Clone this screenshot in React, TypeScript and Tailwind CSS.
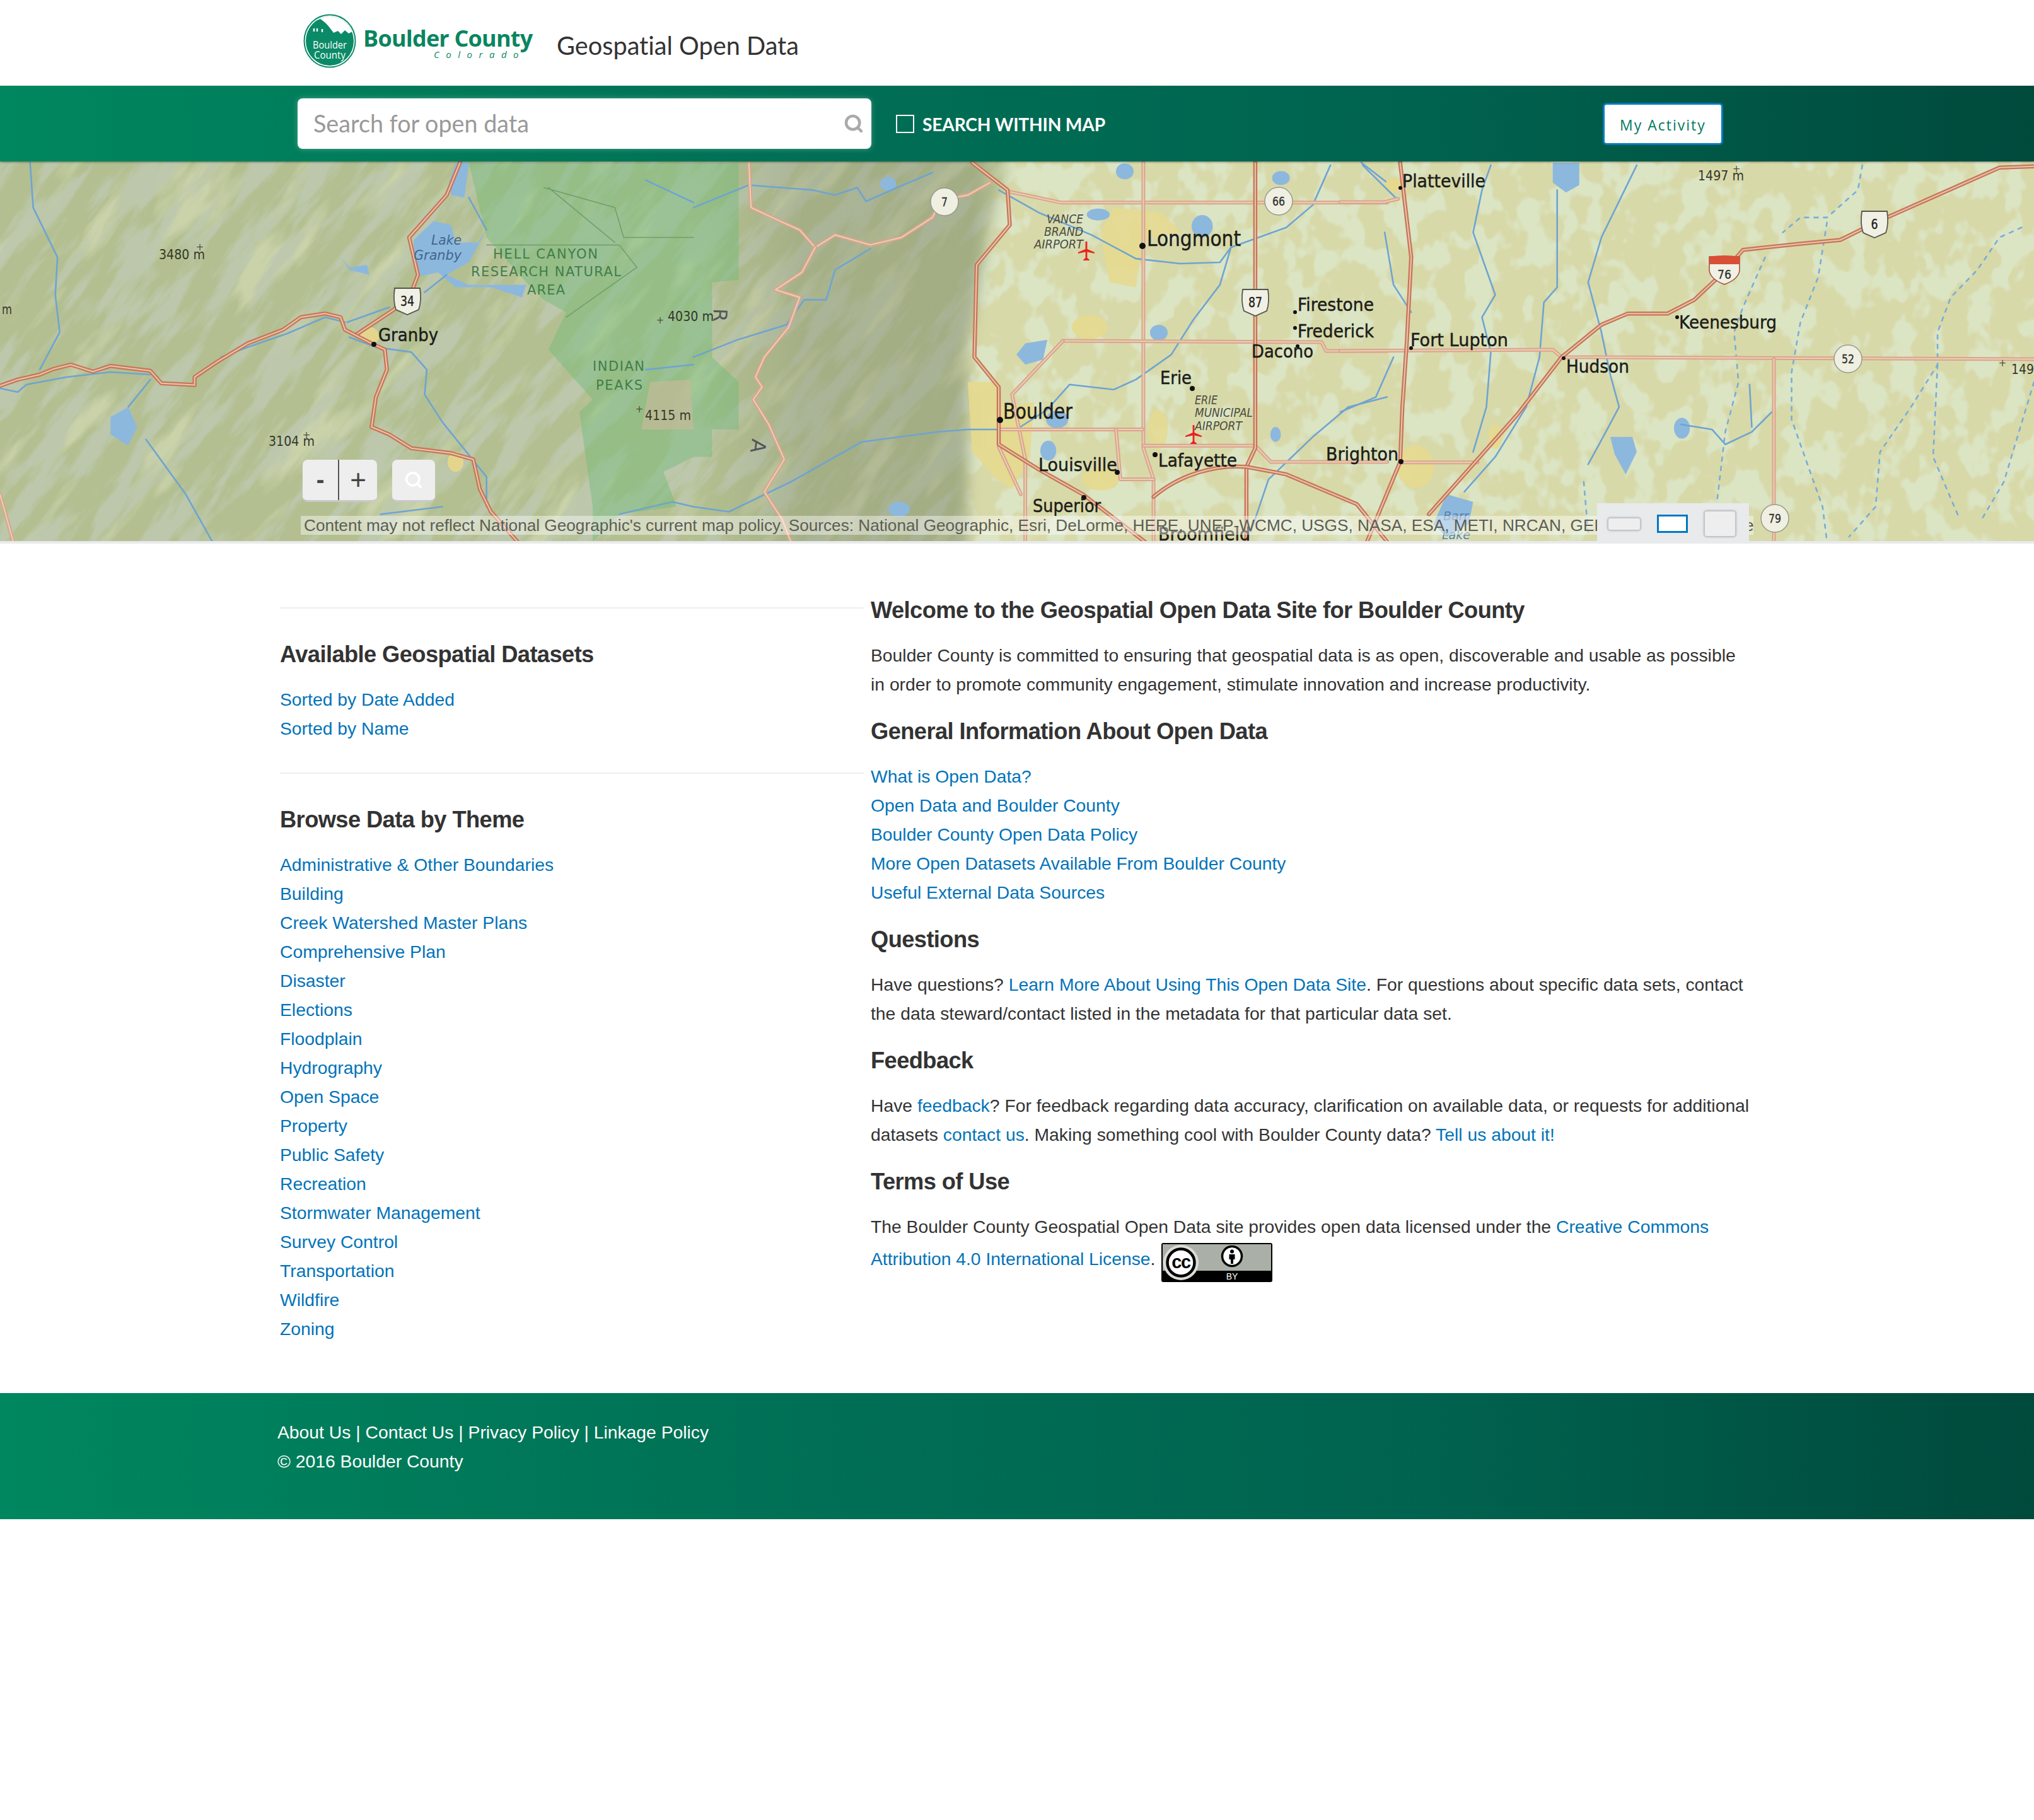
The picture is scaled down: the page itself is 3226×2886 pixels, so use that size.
import React from "react";
import { Search } from "lucide-react";

const P = ({ d, c, w, dash, fill }: { d: string; c: string; w: number; dash?: string; fill?: string }) => (
  <path d={d} fill={fill ?? "none"} stroke={c} strokeWidth={w} strokeDasharray={dash} strokeLinejoin="round" strokeLinecap="round" vectorEffect="non-scaling-stroke" />
);
const Road = ({ d, major }: { d: string; major?: boolean }) => (
  <g>
    <P d={d} c={major ? "#c9745c" : "#dda290"} w={major ? 6.5 : 6} />
    <P d={d} c={major ? "#e6c9a6" : "#e6d4ae"} w={2} />
  </g>
);
const Z = ({ dx, children }: { dx: number; children: React.ReactNode }) => (
  <g transform={`translate(${dx},-7) scale(0.7015,0.3954)`}>{children}</g>
);

const z6Rivers = [
  "M68,20 L75,200 130,400 125,550 135,700 90,850",
  "M0,925 L40,940 60,910 150,880 250,860 340,870",
  "M340,890 L290,1000",
  "M330,1130 L420,1350 480,1540",
  "M500,800 L560,760 650,705 735,640 780,660",
  "M785,660 L880,600",
  "M790,720 L850,760 930,780 965,850 960,950 1000,1060 1050,1170 1100,1280 1100,1400",
  "M1010,470 L960,540",
  "M1060,160 L1100,290",
  "M860,1430 L1000,1400",
  "M1400,1430 L1520,1380 1568,1400",
  "M1460,90 L1568,180",
  "M1460,850 L1568,830",
];
const z7Rivers = [
  "M0,200 L125,110 270,130 320,150 370,120 390,175 460,120 540,60",
  "M690,130 L780,220 900,310 1000,405 1100,425 1190,420 1215,360 1340,280 1400,190 1440,30",
  "M1215,360 L1190,510 1130,650 1080,790 1000,890 950,930 850,910 800,1010 730,1090 620,1090 550,1100 380,1140 220,1300 80,1420 0,1400",
  "M400,365 L320,450 300,570 250,570 210,670 100,730 0,800",
  "M1568,960 L1480,1000 1400,1120 1300,1290 1260,1500",
  "M1510,20 L1568,100",
];
const z8Rivers = [
  "M50,30 L130,170",
  "M340,30 L320,130 300,300 350,550 320,640 340,780 330,1000 300,1180",
  "M100,300 L120,510 160,620",
  "M490,130 L490,520 460,580 450,800 420,1000 350,1200 280,1340",
  "M670,30 L590,320 560,500 590,700 610,870 630,1000 600,1100 560,1230",
  "M770,1070 L840,1090 870,1150 930,1100 975,1020",
  "M925,910 L930,1080",
  "M0,1020 L80,960 120,800",
];
const z8Dashed = [
  "M1180,30 L1170,130 1100,240 1040,240 1000,300",
  "M1100,260 L1080,480 1040,660 1020,860 1020,1050 1090,1400 1100,1540",
  "M960,400 L910,600 890,700 900,900 870,1100 850,1400",
  "M1540,280 L1490,320 1440,450 1380,560 1350,700 1350,830 1290,1000 1220,1180 1210,1400 1150,1520",
  "M1350,830 L1340,1200 1400,1450",
  "M1568,900 L1500,1300 1450,1450",
  "M550,1300 L560,1500",
];

type L = [string, number, number, number, number?, string?];
const bold: L[] = [
  ["Granby", 600, 284, 29, 95],
  ["Longmont", 1819, 133, 34, 149],
  ["Firestone", 2058, 236, 28, 121],
  ["Frederick", 2058, 278, 28, 121],
  ["Dacono", 1985, 310, 28, 98],
  ["Erie", 1840, 352, 28, 50],
  ["Boulder", 1591, 407, 34, 110],
  ["Louisville", 1647, 490, 28, 125],
  ["Lafayette", 1837, 483, 28, 125],
  ["Brighton", 2103, 473, 28, 115],
  ["Superior", 1638, 555, 28, 108],
  ["Broomfield", 1837, 600, 28, 146],
  ["Platteville", 2224, 40, 28, 132],
  ["Fort Lupton", 2237, 292, 28, 155],
  ["Keenesburg", 2663, 264, 28, 155],
  ["Hudson", 2484, 334, 28, 100],
];
const elev: L[] = [
  ["3480 m", 252, 154, 21, 73],
  ["m", 3, 241, 21, 16],
  ["3104 m", 426, 450, 21, 73],
  ["4115 m", 1023, 409, 21, 73],
  ["4030 m", 1059, 252, 21, 73],
  ["1497 m", 2693, 29, 21, 73],
  ["149", 3190, 336, 21, 36],
];
const green: L[] = [
  ["HELL CANYON", 782, 153, 21, 166],
  ["RESEARCH NATURAL", 747, 181, 21, 238],
  ["AREA", 836, 210, 21, 60],
  ["INDIAN", 940, 331, 21, 82],
  ["PEAKS", 945, 361, 21, 74],
];
const italic: L[] = [
  ["VANCE", 1660, 97, 19, 58],
  ["BRAND", 1656, 117, 19, 62],
  ["AIRPORT", 1640, 137, 19, 78],
  ["ERIE", 1895, 384, 19, 36],
  ["MUNICIPAL", 1895, 404, 19, 92],
  ["AIRPORT", 1895, 425, 19, 75],
];
const dots: [number, number, number][] = [
  [593, 289, 4], [1812, 133, 5], [2054, 238, 3], [2054, 263, 3], [2058, 292, 3], [1891, 359, 4],
  [1586, 409, 5], [1772, 492, 4], [1832, 464, 4], [2222, 475, 4], [1719, 532, 4], [2221, 41, 3],
  [2238, 295, 3], [2660, 246, 3], [2480, 311, 3],
];
const pluses: [number, number][] = [[317, 135], [1047, 251], [1014, 392], [2754, 11], [3176, 319], [486, 433]];

const Plane = ({ x, y }: { x: number; y: number }) => (
  <g transform={`translate(${x},${y})`} fill="#e8241f">
    <path d="M-1.4,-15 H1.4 V-3 L13,2 V4 L1.4,1.5 V11 L5,14 V15 H-5 V14 L-1.4,11 V1.5 L-13,4 V2 L-1.4,-3 Z" />
  </g>
);
const Round = ({ x, y, t }: { x: number; y: number; t: string }) => (
  <g>
    <circle cx={x} cy={y} r="22" fill="#efefe2" stroke="#9a9a8e" strokeWidth="1.5" />
    <text x={x} y={y + 7} textAnchor="middle" fontFamily="'DejaVu Sans', sans-serif" fontSize="20" fill="#333" stroke="#333" strokeWidth="0.4" textLength={t.length * 10} lengthAdjust="spacingAndGlyphs">{t}</text>
  </g>
);
const UsShield = ({ x, y, t, w = 40 }: { x: number; y: number; t: string; w?: number }) => (
  <g>
    <path d={`M${x - w / 2},${y - 20} H${x + w / 2} Q${x + w / 2 + 3},${y} ${x + w / 2 - 2},${y + 14} L${x},${y + 22} L${x - w / 2 + 2},${y + 14} Q${x - w / 2 - 3},${y} ${x - w / 2},${y - 20} Z`} fill="#f1f0e4" stroke="#55554e" strokeWidth="1.8" />
    <text x={x} y={y + 8} textAnchor="middle" fontFamily="'DejaVu Sans', sans-serif" fontSize="21" fill="#222" stroke="#222" strokeWidth="0.4" textLength={t.length * 11} lengthAdjust="spacingAndGlyphs">{t}</text>
  </g>
);

function MapArt() {
  const f = "'DejaVu Sans', sans-serif";
  return (
    <svg viewBox="0 -1 3226 602" width="3226" height="602" className="block">
      <defs>
        <filter id="blobs" x="0" y="0" width="100%" height="100%">
          <feTurbulence type="fractalNoise" baseFrequency="0.024 0.018" numOctaves="3" seed="8" />
          <feColorMatrix type="matrix" values="0 0 0 0 0.71  0 0 0 0 0.78  0 0 0 0 0.55  10 0 0 0 -4.9" />
        </filter>
        <filter id="hill" x="0" y="0" width="100%" height="100%">
          <feTurbulence type="fractalNoise" baseFrequency="0.0065 0.03" numOctaves="5" seed="11" />
          <feColorMatrix type="matrix" values="0 0 0 0 0.51  0 0 0 0 0.58  0 0 0 0 0.42  6 0 0 0 -2.75" />
        </filter>
        <filter id="lite" x="0" y="0" width="100%" height="100%">
          <feTurbulence type="fractalNoise" baseFrequency="0.005 0.02" numOctaves="4" seed="21" />
          <feColorMatrix type="matrix" values="0 0 0 0 0.79  0 0 0 0 0.82  0 0 0 0 0.60  5 0 0 0 -2.7" />
        </filter>
        <filter id="soft" x="-5%" y="-5%" width="110%" height="110%">
          <feGaussianBlur stdDeviation="10" />
        </filter>
        <linearGradient id="dark" x1="0" x2="1" y1="0" y2="0">
          <stop offset="0" stopColor="#8d9775" stopOpacity="0" />
          <stop offset="0.7" stopColor="#8d9775" stopOpacity="0" />
          <stop offset="0.8" stopColor="#8a9272" stopOpacity="0.35" />
          <stop offset="0.97" stopColor="#8a9272" stopOpacity="0.4" />
          <stop offset="1" stopColor="#8a9272" stopOpacity="0" />
        </linearGradient>
        <mask id="mt" maskUnits="userSpaceOnUse" x="0" y="-1" width="3226" height="602">
          <path d="M-40,-40 H1610 L1570,110 1535,300 1535,640 H-40 Z" fill="#fff" filter="url(#soft)" />
        </mask>
      </defs>

      <rect y="-1" width="3226" height="602" fill="#d8d9a9" />
      <rect x="1400" y="-1" width="1826" height="602" filter="url(#blobs)" />

      <g mask="url(#mt)">
        <rect y="-1" width="1640" height="602" fill="#b3bf90" />
        <g transform="rotate(-52 800 300)">
          <rect x="-300" y="-900" width="2300" height="2400" filter="url(#lite)" opacity="0.45" />
          <rect x="-300" y="-900" width="2300" height="2400" filter="url(#hill)" opacity="0.95" />
        </g>
        <rect y="-1" width="1590" height="602" fill="url(#dark)" />
      </g>

      <Z dx={0}>
        <path d="M1060,20 L1670,20 L1670,490 L1610,500 L1610,800 L1670,900 L1670,1090 L1610,1090 L1610,1200 L1568,1200 1500,1260 1530,1400 1400,1430 1340,1540 L1340,1400 1310,1020 1340,970 1240,770 1280,620 1230,570 1190,500 1100,320 Z" fill="#6cba78" opacity="0.42" />
        <path d="M1470,900 L1560,890 1568,1090 1450,1090 Z" fill="#c3bb98" opacity="0.75" />
        <P d="M1230,120 L1390,200 1410,320 1568,320 M1100,350 L1400,350 1440,440 1280,640 M1240,120 L1390,340" c="#6d9e6a" w={1.5} />
        <path d="M1030,20 L1060,20 1050,160 1020,150 1015,100 Z" fill="#8db8dd" />
        <path d="M935,330 L980,255 1020,270 1030,340 1080,340 1100,290 1060,420 1010,470 1060,510 1190,510 1180,560 1110,520 1030,520 990,460 940,480 Z" fill="#8db8dd" />
        <path d="M770,400 L790,440 830,430 835,470 790,450 Z" fill="#8db8dd" />
        <path d="M290,1000 L310,1080 290,1155 250,1110 250,1040 Z" fill="#8db8dd" />
        <ellipse cx="1030" cy="1220" rx="18" ry="40" fill="#e3d68c" />
        <ellipse cx="835" cy="715" rx="22" ry="35" fill="#e3d68c" />
        {z6Rivers.map((d, i) => <P key={i} d={d} c="#6ea4d2" w={2.6} />)}
        <Road d="M0,1350 L30,1540" />
        <Road major d="M805,710 L890,610 930,540 945,470 925,320 970,230 1010,150 1040,20" />
        <Road major d="M0,915 L40,890 90,870 120,848 160,830 210,858 250,835 340,855 365,905 440,912 440,880 490,820 560,745 640,690 680,640 735,625 770,640 780,690 840,745 870,770 875,850 850,960 840,1080 880,1110 930,1165 1020,1185 1070,1210 1085,1330 1110,1420 1170,1540" />
      </Z>

      <Z dx={1100}>
        <path d="M950,200 L1060,220 1100,300 1010,330 1010,410 1000,520 940,500 920,300 Z" fill="#e6d98e" opacity="0.85" />
        <ellipse cx="895" cy="680" rx="40" ry="48" fill="#e6d98e" opacity="0.9" />
        <path d="M620,900 L690,900 700,1000 770,980 760,1200 720,1330 680,1280 630,1180 Z" fill="#e6d98e" opacity="0.9" />
        <ellipse cx="920" cy="1290" rx="42" ry="45" fill="#e6d98e" opacity="0.9" />
        <ellipse cx="1050" cy="1090" rx="22" ry="80" fill="#e6d98e" opacity="0.8" />
        <ellipse cx="915" cy="228" rx="26" ry="24" fill="#8db8dd" />
        <ellipse cx="1150" cy="275" rx="24" ry="45" fill="#8db8dd" />
        <path d="M800,730 L790,810 750,830 730,790 750,745 Z" fill="#8db8dd" />
        <ellipse cx="1052" cy="702" rx="20" ry="32" fill="#8db8dd" />
        <ellipse cx="822" cy="1050" rx="25" ry="35" fill="#8db8dd" />
        <ellipse cx="802" cy="1175" rx="18" ry="40" fill="#8db8dd" />
        <ellipse cx="975" cy="55" rx="20" ry="32" fill="#8db8dd" />
        <ellipse cx="1328" cy="82" rx="20" ry="28" fill="#8db8dd" />
        <ellipse cx="1316" cy="1110" rx="12" ry="30" fill="#8db8dd" />
        <ellipse cx="465" cy="1410" rx="24" ry="30" fill="#8db8dd" />
        <ellipse cx="440" cy="105" rx="18" ry="28" fill="#8db8dd" />
        {z7Rivers.map((d, i) => <P key={i} d={d} c="#6ea4d2" w={2.6} />)}
        <Road d="M125,20 L130,200 190,250 240,290 275,360 320,310 400,350 470,320 540,240 560,170 620,150 670,100" />
        <Road d="M275,360 L245,460 185,530 240,560 215,680 160,800 140,880 155,920 135,970 170,1070 205,1210 160,1340 200,1450 220,1540" />
        <Road d="M710,135 L830,180 L1568,180" />
        <Road d="M1017,20 L1017,1165 L1040,1290 1040,1540" />
        <Road d="M835,735 L1420,740 1430,775 1568,775" />
        <Road d="M835,735 L720,950 750,1210 750,1540" />
        <Road d="M690,1090 L1015,1090" />
        <Road d="M955,1090 L965,1290 1040,1290" />
        <Road d="M1017,1155 L1270,1155 1305,1220 1568,1220" />
        <Road d="M690,1160 L740,1350" />
        <Road major d="M1270,20 L1270,1165 L1250,1240 1250,1540" />
        <Road major d="M630,20 L710,130 715,270 640,430 635,800 690,920 690,1150 780,1250 880,1350 1020,1540" />
        <Road major d="M1040,1360 C1100,1270 1180,1230 1250,1240 L1340,1270 1500,1390 1568,1540" />
      </Z>

      <Z dx={2126}>
        <ellipse cx="120" cy="110" rx="18" ry="30" fill="#e6d98e" />
        <ellipse cx="170" cy="1240" rx="42" ry="85" fill="#e6d98e" opacity="0.9" />
        <ellipse cx="350" cy="1120" rx="16" ry="50" fill="#e6d98e" opacity="0.9" />
        <path d="M480,20 L540,20 540,110 510,140 480,100 Z" fill="#8db8dd" />
        <path d="M610,1120 L660,1120 670,1180 645,1270 620,1190 Z" fill="#8db8dd" />
        <ellipse cx="772" cy="1085" rx="18" ry="42" fill="#8db8dd" />
        <path d="M240,1350 L300,1380 290,1470 240,1520 210,1470 Z" fill="#8db8dd" />
        {z8Rivers.map((d, i) => <P key={i} d={d} c="#6ea4d2" w={2.6} />)}
        {z8Dashed.map((d, i) => <P key={i} d={d} c="#78add8" w={2.6} dash="6 9" />)}
        <Road d="M0,178 L100,178 130,165" />
        <Road d="M0,775 L480,770 500,800 L1568,808" />
        <Road d="M140,1222 L310,1222" />
        <Road d="M980,808 L980,1540" />
        <Road major d="M135,20 L160,400 150,740 140,1000 135,1220 60,1540" />
        <Road major d="M200,1430 L300,1230 400,1030 500,800 590,670 650,625 740,625 800,570 860,470 910,370 1040,345 1130,330 1210,260 1490,40 1568,35" />
      </Z>

      <Round x={1498} y={63} t="7" />
      <Round x={2028} y={62} t="66" />
      <Round x={2931} y={312} t="52" />
      <Round x={2815} y={565} t="79" />
      <UsShield x={646} y={220} t="34" />
      <UsShield x={1991} y={222} t="87" />
      <UsShield x={2973} y={98} t="6" />
      <g>
        <path d="M2711,150 H2759 V172 Q2757,186 2735,194 Q2713,186 2711,172 Z" fill="#f1f0e4" stroke="#a04a35" strokeWidth="1.5" />
        <path d="M2711,150 Q2735,146 2759,150 V162 H2711 Z" fill="#d94f35" />
        <text x={2735} y={185} textAnchor="middle" fontFamily={f} fontSize="20" fill="#333" stroke="#333" strokeWidth="0.4" textLength={22} lengthAdjust="spacingAndGlyphs">76</text>
      </g>

      {dots.map(([x, y, r], i) => <circle key={i} cx={x} cy={y} r={r} fill="#111" />)}
      {pluses.map(([x, y], i) => <text key={i} x={x} y={y + 5} textAnchor="middle" fontFamily={f} fontSize="15" fill="#4c4f3a">+</text>)}
      <Plane x={1723} y={141} />
      <Plane x={1893} y={432} />

      {bold.map(([t, x, y, s, w], i) => (
        <text key={i} x={x} y={y} fontFamily={f} fontSize={s} fill="#1d1d19" textLength={w} lengthAdjust="spacingAndGlyphs" stroke="#1d1d19" strokeWidth="0.5">{t}</text>
      ))}
      {elev.map(([t, x, y, s, w], i) => (
        <text key={i} x={x} y={y} fontFamily={f} fontSize={s} fill="#34372a" textLength={w} lengthAdjust="spacingAndGlyphs">{t}</text>
      ))}
      {green.map(([t, x, y, s, w], i) => (
        <text key={i} x={x} y={y} fontFamily={f} fontSize={s} fill="#3f7e4a" textLength={w} lengthAdjust="spacing">{t}</text>
      ))}
      {italic.map(([t, x, y, s, w], i) => (
        <text key={i} x={x} y={y} fontFamily={f} fontStyle="italic" fontSize={s} fill="#4b4c3f" textLength={w} lengthAdjust="spacingAndGlyphs">{t}</text>
      ))}
      <text x={684} y={131} fontFamily={f} fontStyle="italic" fontSize="22" fill="#3f668f" textLength={48} lengthAdjust="spacingAndGlyphs">Lake</text>
      <text x={656} y={155} fontFamily={f} fontStyle="italic" fontSize="22" fill="#3f668f" textLength={76} lengthAdjust="spacingAndGlyphs">Granby</text>
      <text x={2289} y={568} fontFamily={f} fontStyle="italic" fontSize="19" fill="#5a80a8">Barr</text>
      <text x={2287} y={598} fontFamily={f} fontStyle="italic" fontSize="19" fill="#5a80a8">Lake</text>
      <text transform="translate(1132,232) rotate(92)" fontFamily={f} fontSize="30" fill="#51565a">R</text>
      <text transform="translate(1193,438) rotate(98)" fontFamily={f} fontSize="32" fill="#51565a">A</text>
    </svg>
  );
}

function Logo() {
  return (
    <svg width="84" height="86" viewBox="0 0 84 86" className="block">
      <defs>
        <clipPath id="logoClip"><ellipse cx="42" cy="43" rx="38" ry="39" /></clipPath>
      </defs>
      <ellipse cx="42" cy="43" rx="40.5" ry="41.5" fill="#fff" stroke="#0b8a67" strokeWidth="2" />
      <g clipPath="url(#logoClip)">
        <rect width="84" height="86" fill="#0b8a67" />
        <path d="M0,30 L6,28 Q10,14 20,11 L27,8 Q36,14 42,22 L48,30 L55,27 L60,32 L66,26 L72,31 L84,25 L84,0 L0,0 Z" fill="#fff" />
        <path d="M17,28 v-5 M22,28 v-5 M30,29 v-5" stroke="#fff" strokeWidth="2.4" />
      </g>
      <text x="42" y="55" textAnchor="middle" fontFamily="'Open Sans', sans-serif" fontSize="17" fill="#fff" textLength="54" lengthAdjust="spacingAndGlyphs">Boulder</text>
      <text x="42" y="71" textAnchor="middle" fontFamily="'Open Sans', sans-serif" fontSize="17" fill="#fff" textLength="50" lengthAdjust="spacingAndGlyphs">County</text>
    </svg>
  );
}

function CcBadge() {
  return (
    <svg width="176" height="62" viewBox="0 0 176 62" className="block">
      <rect width="176" height="62" rx="3" fill="#000" />
      <rect x="2" y="2" width="172" height="42" fill="#aab0a7" />
      <circle cx="31" cy="31" r="28" fill="#dcdcd8" />
      <circle cx="31" cy="31" r="21.5" fill="#fff" stroke="#000" strokeWidth="4.5" />
      <text x="31" y="40" textAnchor="middle" fontFamily="'Liberation Sans', sans-serif" fontSize="29" fontWeight="700" letterSpacing="-1.5" fill="#000">cc</text>
      <circle cx="112" cy="21" r="15.5" fill="#fff" stroke="#000" strokeWidth="3.5" />
      <circle cx="112" cy="13.5" r="3" fill="#000" />
      <path d="M107.5,18 H116.5 V26 H114 V33 H110 V26 H107.5 Z" fill="#000" />
      <text x="112" y="58" textAnchor="middle" fontFamily="'Liberation Sans', sans-serif" fontSize="14" fill="#fff">BY</text>
    </svg>
  );
}

const A = ({ children }: { children: React.ReactNode }) => (
  <a href="#" className="text-[#0273b9]">{children}</a>
);
const H = ({ children }: { children: React.ReactNode }) => (
  <h2 className="text-[36.3px] leading-[50px] h-[50px] font-bold tracking-[-0.6px] text-[#333] mb-[23px] whitespace-nowrap">{children}</h2>
);
const themes = [
  "Administrative & Other Boundaries", "Building", "Creek Watershed Master Plans", "Comprehensive Plan", "Disaster",
  "Elections", "Floodplain", "Hydrography", "Open Space", "Property", "Public Safety", "Recreation",
  "Stormwater Management", "Survey Control", "Transportation", "Wildfire", "Zoning",
];
const general = [
  "What is Open Data?", "Open Data and Boulder County", "Boulder County Open Data Policy",
  "More Open Datasets Available From Boulder County", "Useful External Data Sources",
];
const grad = "bg-[linear-gradient(to_right,#00875f_0%,#006f55_40%,#00634f_70%,#004a3c_100%)]";

export default function App() {
  return (
    <div className="w-[3226px] h-[2886px] bg-white text-[#333] font-['Liberation_Sans',Arial,sans-serif] text-[28.3px] leading-[46px] overflow-hidden">
      <header className="h-[136px] flex items-start pt-[22px] pl-[481px]">
        <Logo />
        <div className="relative w-[270px] h-[86px] ml-[11px]">
          <div className="font-['Open_Sans',sans-serif] font-bold text-[36px] leading-[50px] text-[#0a8560] tracking-[-0.8px] mt-[14px] whitespace-nowrap">Boulder County</div>
          <div className="font-['Open_Sans',sans-serif] italic text-[15px] leading-[18px] text-[#0a8560] tracking-[10.5px] ml-[112px] mt-[-9px] whitespace-nowrap">Colorado</div>
        </div>
        <div className="font-['Lato',sans-serif] [font-variant-ligatures:none] text-[39.7px] leading-[46px] text-[#333] ml-[37px] mt-[27px] whitespace-nowrap">Geospatial Open Data</div>
      </header>

      <div className={`h-[120px] ${grad} flex items-center pl-[472px] relative z-10 shadow-[0_1px_3px_rgba(0,0,0,0.45)]`}>
        <div className="w-[910px] h-[80px] bg-white rounded-[8px] flex items-center justify-between pl-[25px] pr-[12px] shadow-[0_0_8px_rgba(255,255,255,0.3)]">
          <span className="font-['Lato',sans-serif] [font-variant-ligatures:none] text-[37.7px] text-[#999] whitespace-nowrap">Search for open data</span>
          <Search className="w-[32px] h-[32px] text-[#aaa]" strokeWidth={3.4} />
        </div>
        <div className="w-[29px] h-[29px] border-2 border-white ml-[39px]" />
        <span className="font-['Lato',sans-serif] font-bold text-[28.2px] text-white ml-[13px] mt-[2px] whitespace-nowrap tracking-[-0.2px]">SEARCH WITHIN MAP</span>
        <button className="w-[191px] h-[67px] pt-[3px] bg-white border-[3px] border-[#0079c1] rounded-[6px] ml-[789px] font-['Open_Sans',sans-serif] text-[23px] tracking-[2px] text-[#007a5e] whitespace-nowrap">My Activity</button>
      </div>

      <div className="relative h-[602px] overflow-hidden">
        <MapArt />
        <div className="absolute left-[480px] top-[473px] w-[118px] h-[67px] flex bg-[#eeeeee] rounded-[8px] border-b-[3px] border-[#c9c9c9] text-[#444]">
          <div className="w-[58px] flex items-center justify-center border-r-[2px] border-[#555] text-[38px] font-bold leading-none">-</div>
          <div className="flex-1 flex items-center justify-center text-[44px] leading-none">+</div>
        </div>
        <div className="absolute left-[622px] top-[473px] w-[68px] h-[67px] flex items-center justify-center bg-[#eeeeee] rounded-[8px] border-b-[3px] border-[#c9c9c9]">
          <Search className="w-[30px] h-[30px] text-white" strokeWidth={3} />
        </div>
        <div className="absolute left-[477px] top-[562px] w-[2304px] h-[30px] bg-[rgba(255,255,255,0.42)] pl-[5px] text-[26.2px] leading-[30px] text-[#5c5e54] whitespace-nowrap overflow-hidden">
          Content may not reflect National Geographic's current map policy. Sources: National Geographic, Esri, DeLorme, HERE, UNEP-WCMC, USGS, NASA, ESA, METI, NRCAN, GEBCO, NOAA, increment P Corp.
        </div>
        <div className="absolute left-[2533px] top-[542px] w-[241px] h-[60px] bg-[#e9eaec]">
          <div className="absolute left-[18px] top-[24px] w-[50px] h-[18px] bg-[#eeeeee] rounded-[3px] shadow-[0_0_3px_2px_rgba(0,0,0,0.2)]" />
          <div className="absolute left-[95px] top-[18px] w-[49px] h-[29px] bg-white border-[3px] border-[#0079c1]" />
          <div className="absolute left-[171px] top-[13px] w-[48px] h-[39px] bg-[#eeeeee] rounded-[3px] shadow-[0_0_3px_2px_rgba(0,0,0,0.2)]" />
        </div>
      </div>
      <div className="h-[4px] bg-[#e9eaec]" />

      <main className="flex pl-[444px] pb-[79px]">
        <aside className="w-[926px] pt-[101px] shrink-0">
          <div className="border-t-2 border-[#eeeeee] pt-[48px] pb-[47px]">
            <div className="mb-[2px]"><H>Available Geospatial Datasets</H></div>
            <div className="flex flex-col items-start">
              <A>Sorted by Date Added</A>
              <A>Sorted by Name</A>
            </div>
          </div>
          <div className="border-t-2 border-[#eeeeee] pt-[48px]">
            <div className="mb-[2px]"><H>Browse Data by Theme</H></div>
            <div className="flex flex-col items-start">
              {themes.map((t) => <A key={t}>{t}</A>)}
            </div>
          </div>
        </aside>
        <section className="ml-[11px] pt-[81px] w-[1430px]">
          <H>Welcome to the Geospatial Open Data Site for Boulder County</H>
          <p className="mb-[27px] whitespace-nowrap">
            Boulder County is committed to ensuring that geospatial data is as open, discoverable and usable as possible<br />
            in order to promote community engagement, stimulate innovation and increase productivity.
          </p>
          <H>General Information About Open Data</H>
          <div className="flex flex-col items-start mb-[27px]">
            {general.map((t) => <A key={t}>{t}</A>)}
          </div>
          <H>Questions</H>
          <p className="mb-[27px] whitespace-nowrap">
            Have questions? <A>Learn More About Using This Open Data Site</A>. For questions about specific data sets, contact<br />
            the data steward/contact listed in the metadata for that particular data set.
          </p>
          <H>Feedback</H>
          <p className="mb-[27px] whitespace-nowrap">
            Have <A>feedback</A>? For feedback regarding data accuracy, clarification on available data, or requests for additional<br />
            datasets <A>contact us</A>. Making something cool with Boulder County data? <A>Tell us about it!</A>
          </p>
          <H>Terms of Use</H>
          <div className="whitespace-nowrap">
            <div>The Boulder County Geospatial Open Data site provides open data licensed under the <A>Creative Commons</A></div>
            <div className="flex items-start mt-[5px]">
              <span><A>Attribution 4.0 International License</A>.</span>
              <span className="ml-[10px] mt-[-2px]"><CcBadge /></span>
            </div>
          </div>
        </section>
      </main>

      <footer className={`h-[200px] ${grad} pl-[440px] pt-[39px] text-white`}>
        <div>About Us | Contact Us | Privacy Policy | Linkage Policy</div>
        <div>© 2016 Boulder County</div>
      </footer>
    </div>
  );
}
